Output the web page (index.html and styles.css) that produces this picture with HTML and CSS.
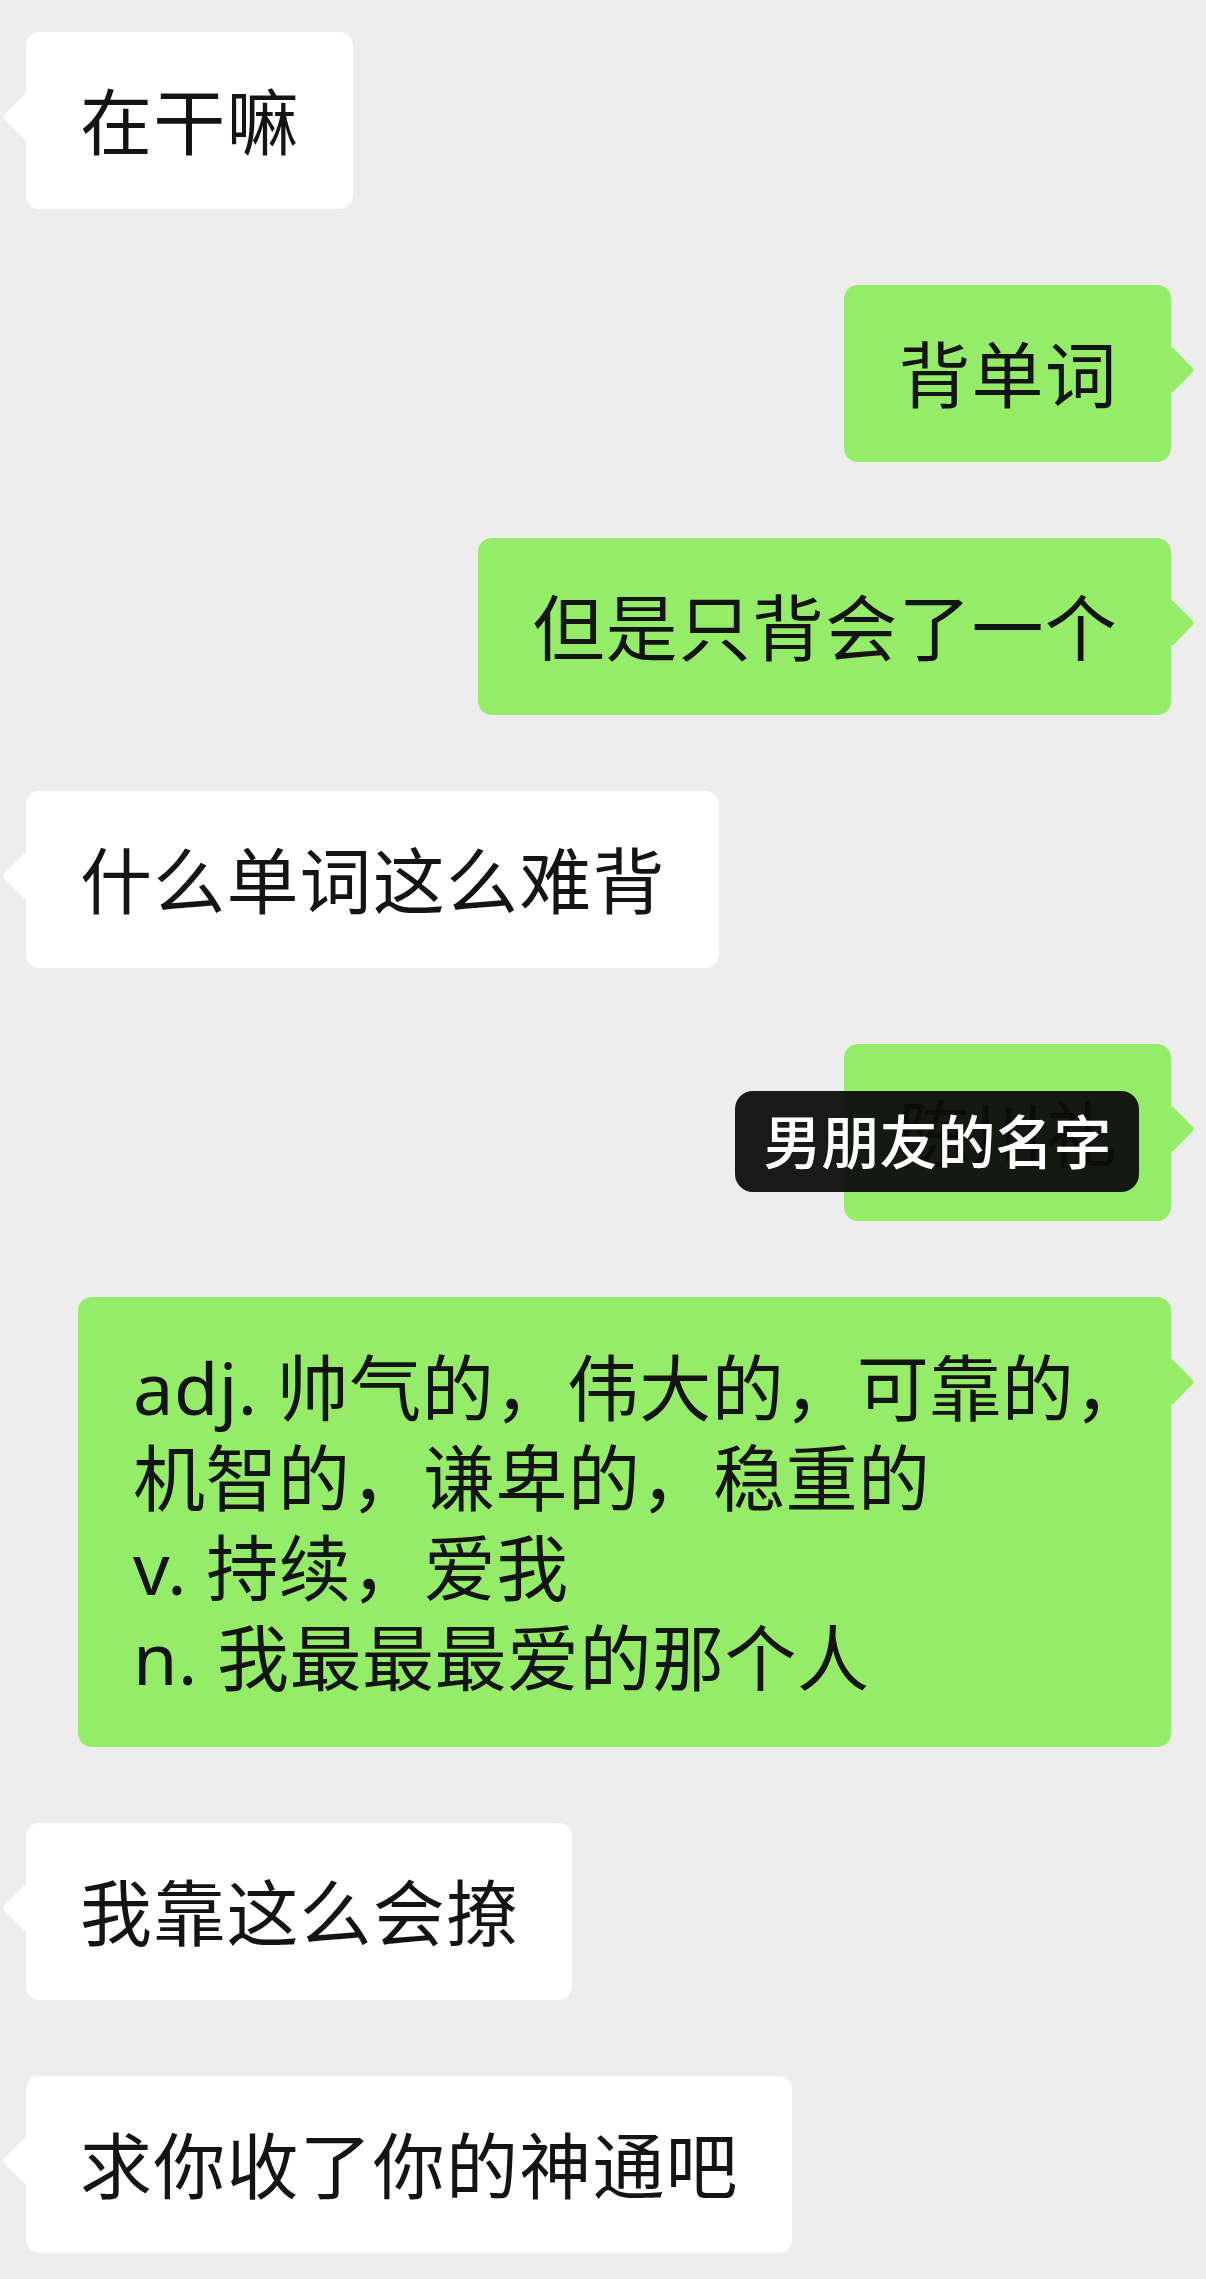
FILE: index.html
```html
<!DOCTYPE html>
<html lang="zh-CN">
<head>
<meta charset="utf-8">
<title>聊天</title>
<link rel="stylesheet" href="styles.css">
</head>
<body>
<main class="chat">
  <div class="bubble bubble--in">在干嘛</div>
  <div class="bubble bubble--out">背单词</div>
  <div class="bubble bubble--out">但是只背会了一个</div>
  <div class="bubble bubble--in">什么单词这么难背</div>
  <div class="bubble bubble--out">陈川礼<span class="label">男朋友的名字</span></div>
  <div class="bubble bubble--out bubble--wide">adj. 帅气的，伟大的，可靠的，<br>机智的，谦卑的，稳重的<br>v. 持续，爱我<br>n. 我最最最爱的那个人</div>
  <div class="bubble bubble--in">我靠这么会撩</div>
  <div class="bubble bubble--in">求你收了你的神通吧</div>
</main>
</body>
</html>
```
FILE: styles.css
```css
html, body {
  margin: 0;
  padding: 0;
  background: #ededed;
}

.chat {
  display: flex;
  flex-direction: column;
  gap: 76px;
  padding: 32px 35px 0 26px;
  font-family: "Noto Sans", "Noto Sans CJK SC", sans-serif;
  color: #141414;
}

.bubble {
  position: relative;
  font-size: 72px;
  line-height: 90px;
  letter-spacing: 1.2px;
  padding: 44px 53px 43px 54px;
  border-radius: 14px;
  white-space: nowrap;
}

.bubble::before {
  content: "";
  position: absolute;
  top: 68px;
  width: 34px;
  height: 34px;
  border-radius: 4px;
  transform: rotate(45deg);
  background: inherit;
}

.bubble--in {
  align-self: flex-start;
  background: #ffffff;
}

.bubble--in::before {
  left: -17px;
}

.bubble--out {
  align-self: flex-end;
  background: #95ec69;
}

.bubble--out::before {
  right: -17px;
}

.bubble--wide {
  box-sizing: border-box;
  width: 1093px;
  letter-spacing: 0.5px;
  padding: 45px 20px 45px 55px;
}

.label {
  position: absolute;
  left: -109px;
  top: 47px;
  width: 404px;
  height: 101px;
  box-sizing: border-box;
  display: flex;
  align-items: center;
  justify-content: center;
  background: rgba(12, 12, 12, 0.94);
  color: #ffffff;
  font-size: 58px;
  font-weight: 500;
  letter-spacing: 0;
  border-radius: 18px;
  z-index: 1;
}
```
